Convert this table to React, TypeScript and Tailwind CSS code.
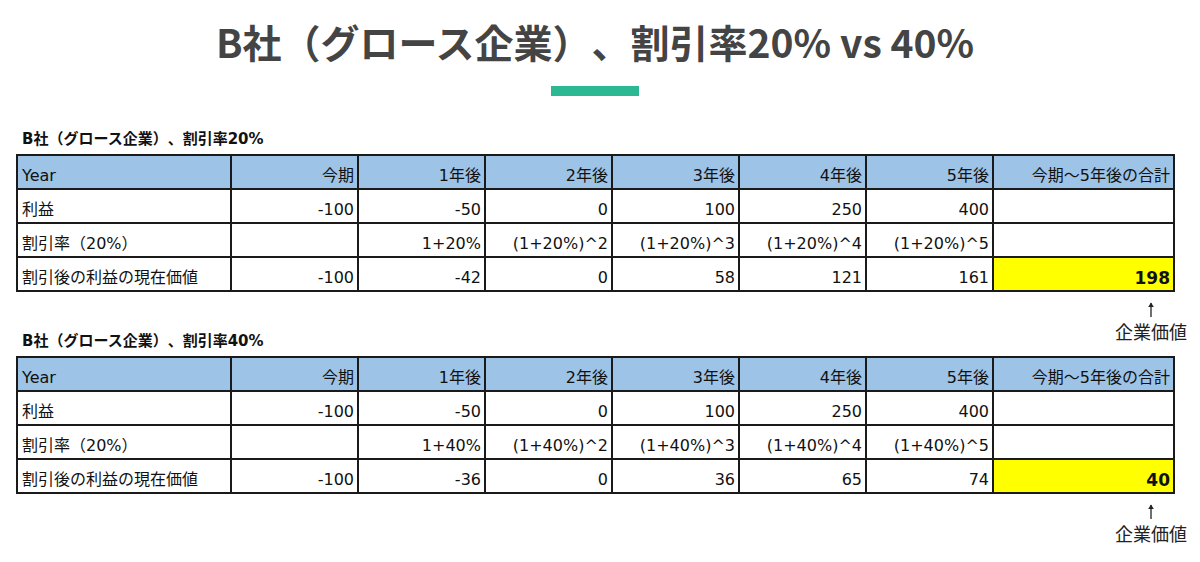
const cols = ["w-[214px]", "w-[127px]", "w-[127px]", "w-[127px]", "w-[127px]", "w-[127px]", "w-[127px]", "w-[181px]"];

type TableData = {
  rate: string;
  factors: string[];
  profits: string[];
  pv: string[];
  total: string;
};

const headers = ["今期", "1年後", "2年後", "3年後", "4年後", "5年後", "今期～5年後の合計"];

function Cell({ children, left, yellow, bold }: { children?: React.ReactNode; left?: boolean; yellow?: boolean; bold?: boolean }) {
  return (
    <td
      className={`h-[34px] border-2 border-[#1a1a1a] align-bottom pb-[2px] leading-[20px] ${left ? "text-left pl-[4px]" : "text-right pr-[3px]"} ${yellow ? "bg-[#ffff00]" : ""} ${bold ? "font-bold text-[17px]" : ""}`}
    >
      {children}
    </td>
  );
}

function DcfTable({ data }: { data: TableData }) {
  return (
    <div className="relative w-[1157px]">
      <table className="table-fixed border-collapse w-[1157px] text-[16px] text-[#111]">
        <colgroup>
          {cols.map((c, i) => (
            <col key={i} className={c} />
          ))}
        </colgroup>
        <tbody>
          <tr className="bg-[#9dc3e6]">
            <Cell left>Year</Cell>
            {headers.map((h) => (
              <Cell key={h}>{h}</Cell>
            ))}
          </tr>
          <tr>
            <Cell left>利益</Cell>
            {data.profits.map((p, i) => (
              <Cell key={i}>{p}</Cell>
            ))}
            <Cell />
          </tr>
          <tr>
            <Cell left>割引率（20%）</Cell>
            <Cell />
            {data.factors.map((f, i) => (
              <Cell key={i}>{f}</Cell>
            ))}
            <Cell />
          </tr>
          <tr>
            <Cell left>割引後の利益の現在価値</Cell>
            {data.pv.map((p, i) => (
              <Cell key={i}>{p}</Cell>
            ))}
            <Cell yellow bold>
              {data.total}
            </Cell>
          </tr>
        </tbody>
      </table>
      {/* annotation under the total */}
      <div className="absolute top-full right-[-14px] mt-[9px] flex flex-col items-center">
        <svg width="10" height="16" viewBox="0 0 10 16" className="text-[#222]">
          <path d="M5 2 L5 16" stroke="currentColor" strokeWidth="1.3" />
          <path d="M2.2 6 L5 1.5 L7.8 6 Z" fill="currentColor" />
        </svg>
        <span className="mt-[3px] text-[18px] leading-[22px] text-[#222] font-['Noto_Sans_CJK_JP',sans-serif]">企業価値</span>
      </div>
    </div>
  );
}

const t20: TableData = {
  rate: "20%",
  profits: ["-100", "-50", "0", "100", "250", "400"],
  factors: ["1+20%", "(1+20%)^2", "(1+20%)^3", "(1+20%)^4", "(1+20%)^5"],
  pv: ["-100", "-42", "0", "58", "121", "161"],
  total: "198",
};

const t40: TableData = {
  rate: "40%",
  profits: ["-100", "-50", "0", "100", "250", "400"],
  factors: ["1+40%", "(1+40%)^2", "(1+40%)^3", "(1+40%)^4", "(1+40%)^5"],
  pv: ["-100", "-36", "0", "36", "65", "74"],
  total: "40",
};

export default function App() {
  return (
    <div className="w-[1200px] h-[562px] bg-white overflow-hidden [text-spacing-trim:space-all] font-['DejaVu_Sans','Noto_Sans_CJK_JP',sans-serif]">
      <div className="flex flex-col items-center pr-[10px]">
        <h1 className="mt-[21px] text-[39px] leading-[40px] font-bold text-[#444444] font-['Noto_Sans_CJK_JP',sans-serif]">
          B社（グロース企業）、割引率20% vs 40%
        </h1>
        <div className="mt-[25px] w-[88px] h-[10px] bg-[#2db894]" />
      </div>

      <div className="pl-[16px]">
        <h2 className="mt-[33px] pl-[6px] text-[15px] leading-[20px] font-bold text-[#111]">B社（グロース企業）、割引率20%</h2>
        <div className="mt-[5px]">
          <DcfTable data={t20} />
        </div>

        <h2 className="mt-[39px] pl-[6px] text-[15px] leading-[20px] font-bold text-[#111]">B社（グロース企業）、割引率40%</h2>
        <div className="mt-[5px]">
          <DcfTable data={t40} />
        </div>
      </div>
    </div>
  );
}
